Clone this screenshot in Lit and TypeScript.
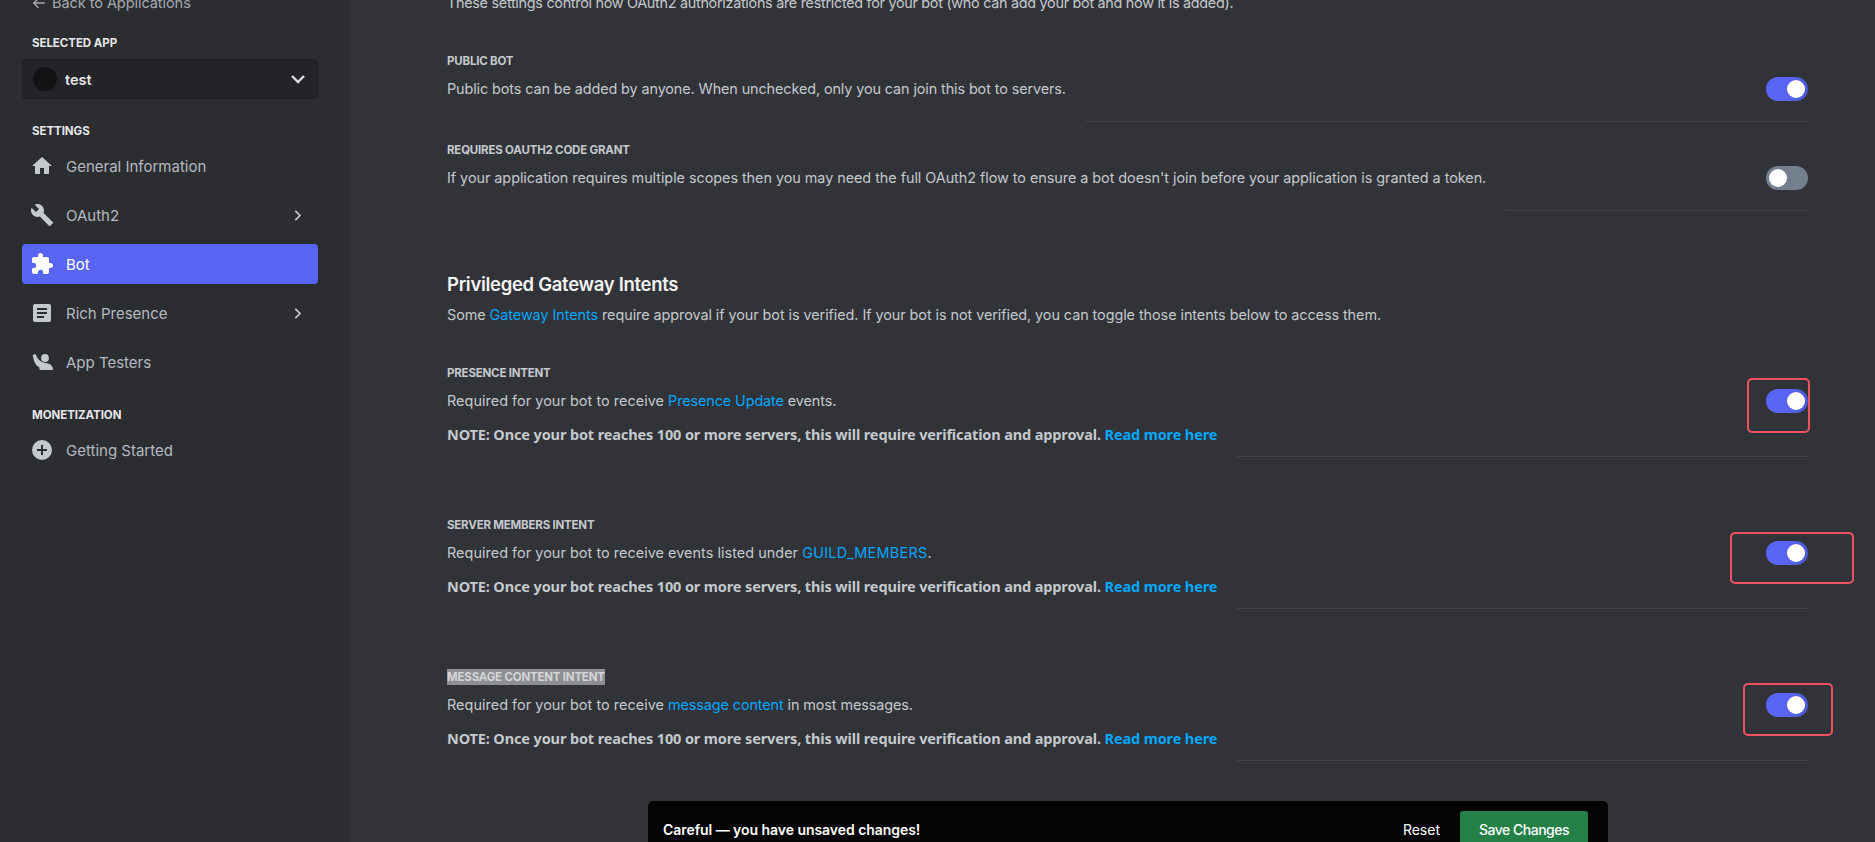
import { LitElement, html, css, svg } from "lit";
import { customElement } from "lit/decorators.js";

const icon = (d: unknown, cls = "") => html`<svg class="ico ${cls}" viewBox="0 0 24 24" fill="currentColor">${d}</svg>`;
const home = svg`<path d="M10 20v-6h4v6h5v-8h3L12 3 2 12h3v8z"/>`;
const wrench = svg`<path d="M22.7 19l-9.1-9.1c.9-2.3.4-5-1.5-6.9-2-2-5-2.4-7.4-1.3L9 6 6 9 1.6 4.7C.4 7.1.9 10.1 2.9 12.1c1.9 1.9 4.6 2.4 6.9 1.5l9.1 9.1c.4.4 1 .4 1.4 0l2.3-2.3c.5-.4.5-1.1.1-1.4z"/>`;
const puzzle = svg`<path d="M20.5 11H19V7c0-1.1-.9-2-2-2h-4V3.5C13 2.12 11.88 1 10.5 1S8 2.12 8 3.5V5H4c-1.1 0-1.99.9-1.99 2v3.8H3.5c1.49 0 2.7 1.21 2.7 2.7s-1.21 2.7-2.7 2.7H2V20c0 1.1.9 2 2 2h3.8v-1.5c0-1.49 1.21-2.7 2.7-2.7 1.49 0 2.7 1.21 2.7 2.7V22H17c1.1 0 2-.9 2-2v-4h1.5c1.38 0 2.5-1.12 2.5-2.5S21.88 11 20.5 11z"/>`;
const article = svg`<path d="M19 3H5c-1.1 0-2 .9-2 2v14c0 1.1.9 2 2 2h14c1.1 0 2-.9 2-2V5c0-1.1-.9-2-2-2zm-5 14H7v-2h7v2zm3-4H7v-2h10v2zm0-4H7V7h10v2z"/>`;
const testers = svg`<circle cx="15" cy="8" r="3.9"/><path d="M2.7 5 5.6 4C6.5 7.5 9 10.5 12 12c2.5 1 4 1 6 1.5 3 .7 5 3 5 6.5H9.5v-2.5C6 16 3.5 11 2.7 5z"/>`;
const plus = svg`<path d="M12 2a10 10 0 100 20 10 10 0 000-20zm5 11h-4v4h-2v-4H7v-2h4V7h2v4h4v2z"/>`;
const chevR = html`<svg class="chev" viewBox="0 0 24 24" fill="none" stroke="currentColor" stroke-width="2.8"><path d="M8.5 4.5 16 12l-7.5 7.5"/></svg>`;

@customElement("app-root")
export class AppRoot extends LitElement {
  static styles = css`
    :host { display: flex; width: 100%; height: 842px; overflow: hidden; position: relative; background: #313338;
      font-family: "Inter", sans-serif; color: #c4c9ce; }
    * { box-sizing: border-box; }
    .side { width: 350px; flex: none; background: #2b2d31; padding: 0 32px 0 22px; display: flex; flex-direction: column; }
    .back { margin: -7px 0 0 10px; height: 20px; line-height: 20px; font-size: 14.6px; color: #a4a9b0; display: flex; align-items: center; gap: 6px; letter-spacing: -0.1px; }
    .back svg { width: 14px; height: 14px; }
    .cap { font-size: 11.5px; line-height: 16px; font-weight: 700; color: #e6e7e9; margin-left: 10px; letter-spacing: -0.05px; }
    .sel-cap { margin-top: 22px; }
    .select { margin-top: 8px; height: 40px; width: 296px; background: #232428; border-radius: 4px; border: 1px solid #1f2023; display: flex; align-items: center; padding: 0 10px 0 10px; }
    .avatar { width: 24px; height: 24px; border-radius: 50%; background: #111214; flex: none; }
    .select .name { margin-left: 8px; font-size: 14.5px; font-weight: 600; color: #e6e7e9; flex: 1; }
    .select svg { width: 18px; height: 18px; color: #dbdee1; }
    .set-cap { margin-top: 24px; }
    .mon-cap { margin-top: 25px; }
    .nav { display: flex; flex-direction: column; gap: 9px; margin-top: 7px; width: 296px; }
    .mon { margin-top: 7px; }
    .item { height: 40px; border-radius: 4px; display: flex; align-items: center; padding: 0 11px 0 8px; font-size: 15px; color: #b5bac1; }
    .item.on { background: #5865f2; color: #fff; }
    .ico { width: 24px; height: 24px; flex: none; color: #c4c9ce; }
    .on .ico { color: #fff; }
    .label { margin-left: 12px; flex: 1; }
    .chev { width: 15px; height: 15px; color: #c4c9ce; margin-right: 2px; }

    .main { flex: 1; padding: 0 67px 0 97px; min-width: 0; }
    .intro { margin-top: -7px; height: 20px; letter-spacing: -0.29px; }
    p { margin: 0; }
    .line { font-size: 14.4px; letter-spacing: -0.1px; line-height: 20px; white-space: nowrap; color: #c4c9ce; }
    .intro.line { letter-spacing: -0.29px; }
    .tight { letter-spacing: -0.04px; }
    .sub.line { letter-spacing: -0.06px; }
    .lead { letter-spacing: 0.05px; }
    .wide { letter-spacing: 0.3px; }
    a { color: #00a8fc; text-decoration: none; }
    .row { display: flex; }
    .row-label { font-size: 11.5px; line-height: 16px; font-weight: 700; color: #c4c9ce; letter-spacing: -0.2px; white-space: nowrap; }
    .row-label mark { background: #8e8f93; color: #d4d5d8; display: inline-block; }
    .copy { flex: none; padding-bottom: 23px; }
    .copy .line { margin-top: 10px; }
    .copy.noted { padding-bottom: 13px; }
    .copy .note { margin-top: 13px; font-family: "Noto Sans", sans-serif; font-weight: 700; font-size: 14.5px; letter-spacing: -0.13px; }
    .fill { flex: 1; margin-left: 20px; border-bottom: 1px solid #41434a; display: flex; justify-content: flex-end; align-items: flex-start; padding-top: 24px; }
    .toggle { width: 42px; height: 24px; border-radius: 12px; background: linear-gradient(90deg, #5865f2 60%, #4e58cf); display: flex; align-items: center; justify-content: flex-end; padding: 0 3px; }
    .toggle.off { background: #747f8d; justify-content: flex-start; }
    .toggle i { width: 18px; height: 18px; border-radius: 50%; background: #fff; display: block; }
    .r1 { margin-top: 40px; } .r2 { margin-top: 20px; } .r3 { margin-top: 40px; } .r4 { margin-top: 60px; }
    h2 { margin: 61px 0 0; font-size: 18.5px; font-weight: 600; line-height: 24px; color: #f2f3f5; letter-spacing: -0.3px; }
    .sub { margin-top: 9px; }
    .mark { position: absolute; border: 2px solid #f2505f; border-radius: 5px; pointer-events: none; }
    .bar { position: absolute; left: 648px; top: 801px; width: 960px; height: 41px; overflow: hidden; background: #050505; border-radius: 5px 5px 0 0; display: flex; align-items: flex-start; padding: 10px 20px 0 15px; color: #fff; }
    .bar .msg { flex: 1; font-weight: 600; font-size: 14px; line-height: 38px; letter-spacing: -0.05px; }
    .bar .reset { font-size: 14px; line-height: 38px; margin-right: 20px; }
    .bar .save { width: 128px; height: 38px; flex: none; background: #248046; border-radius: 3px; text-align: center; line-height: 38px; font-size: 14px; font-weight: 500; letter-spacing: -0.5px; }
  `;

  private note() {
    return html`<p class="line note">NOTE: Once your bot reaches 100 or more servers, this will require verification and approval. <a>Read more here</a></p>`;
  }

  private row(cls: string, label: unknown, body: unknown, noted: boolean, on = true) {
    return html`<div class="row ${cls}">
      <div class="copy ${noted ? "noted" : ""}">
        <div class="row-label">${label}</div>
        <p class="line">${body}</p>
        ${noted ? this.note() : ""}
      </div>
      <div class="fill"><div class="toggle ${on ? "" : "off"}"><i></i></div></div>
    </div>`;
  }

  render() {
    return html`
      <aside class="side">
        <div class="back"><svg viewBox="0 0 24 24" fill="none" stroke="currentColor" stroke-width="2.4"><path d="M22 12H4M11 4l-8 8 8 8"/></svg>Back to Applications</div>
        <div class="cap sel-cap">SELECTED APP</div>
        <div class="select"><span class="avatar"></span><span class="name">test</span>
          <svg viewBox="0 0 24 24" fill="none" stroke="currentColor" stroke-width="3.2"><path d="M4 8l8 8 8-8"/></svg></div>
        <div class="cap set-cap">SETTINGS</div>
        <nav class="nav">
          <div class="item">${icon(home)}<span class="label">General Information</span></div>
          <div class="item">${icon(wrench)}<span class="label">OAuth2</span>${chevR}</div>
          <div class="item on">${icon(puzzle)}<span class="label">Bot</span></div>
          <div class="item">${icon(article)}<span class="label">Rich Presence</span>${chevR}</div>
          <div class="item">${icon(testers)}<span class="label">App Testers</span></div>
        </nav>
        <div class="cap mon-cap">MONETIZATION</div>
        <nav class="nav mon">
          <div class="item">${icon(plus)}<span class="label">Getting Started</span></div>
        </nav>
      </aside>
      <main class="main">
        <p class="line intro">These settings control how OAuth2 authorizations are restricted for your bot (who can add your bot and how it is added).</p>
        ${this.row("r1", "PUBLIC BOT", "Public bots can be added by anyone. When unchecked, only you can join this bot to servers.", false)}
        ${this.row("r2", "REQUIRES OAUTH2 CODE GRANT", html`<span class="tight">If your application requires multiple scopes then you may need the full OAuth2 flow to ensure a bot doesn't join before your application is granted a token.</span>`, false, false)}
        <h2>Privileged Gateway Intents</h2>
        <p class="line sub">Some <a>Gateway Intents</a> require approval if your bot is verified. If your bot is not verified, you can toggle those intents below to access them.</p>
        ${this.row("r3", "PRESENCE INTENT", html`<span class="lead">Required for your bot to receive </span><a>Presence Update</a> events.`, true)}
        ${this.row("r4", "SERVER MEMBERS INTENT", html`<span class="lead">Required for your bot to receive events listed under </span><a class="wide">GUILD_MEMBERS</a>.`, true)}
        ${this.row("r4", html`<mark>MESSAGE CONTENT INTENT</mark>`, html`<span class="lead">Required for your bot to receive </span><a>message content</a> in most messages.`, true)}
      </main>
      <div class="mark" style="left:1747px;top:378px;width:63px;height:55px"></div>
      <div class="mark" style="left:1730px;top:532px;width:124px;height:52px"></div>
      <div class="mark" style="left:1743px;top:683px;width:90px;height:53px"></div>
      <div class="bar"><span class="msg">Careful — you have unsaved changes!</span><span class="reset">Reset</span><span class="save">Save Changes</span></div>
    `;
  }
}
